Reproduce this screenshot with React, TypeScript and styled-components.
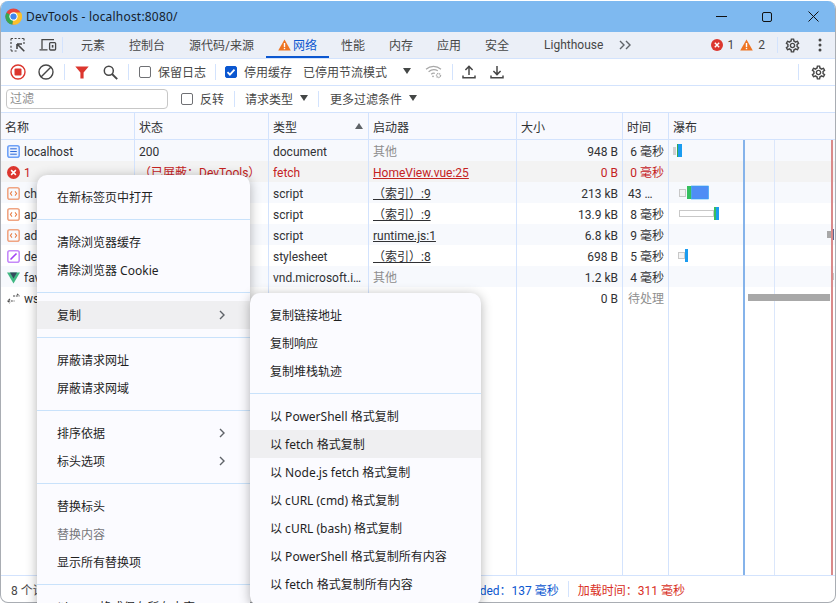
import { createGlobalStyle, styled } from 'styled-components';
import { MdOutlineSettings } from 'react-icons/md';

const GlobalStyle = createGlobalStyle`
    html, body {
        margin: 0;
        padding: 0;
        background: #fff;
    }
    * {
        box-sizing: border-box;
    }
`;

const LINE = '#d3e3fd';
const FONT = 'Roboto, "Noto Sans CJK SC", sans-serif';
const MENU_FONT = '"Noto Sans", "Noto Sans CJK SC", sans-serif';

const Page = styled.div`
    position: relative;
    width: 836px;
    height: 603px;
    padding-top: 1px;
    overflow: hidden;
    font-family: ${FONT};
    font-size: 12px;
    color: #303134;
`;

const Window = styled.div`
    height: 602px;
    display: flex;
    flex-direction: column;
    overflow: hidden;
    border: 1px solid #a9adb3;
    border-top: 0;
    border-radius: 8px;
    background: #fff;
`;

const TitleBar = styled.div`
    height: 31px;
    flex: none;
    display: flex;
    align-items: center;
    padding-left: 4px;
    background: #7eb9f0;
    color: #16212c;
`;

const TitleText = styled.span`
    margin-left: 4px;
    flex: 1;
    font-family: ${MENU_FONT};
    letter-spacing: 0.2px;
`;

const WindowButton = styled.div`
    width: 46px;
    height: 31px;
    padding-left: 2px;
    display: grid;
    place-content: center;
`;

const TabBar = styled.div`
    height: 27px;
    flex: none;
    display: flex;
    align-items: stretch;
    padding-left: 9px;
    background: #ebeff7;
    border-bottom: 1px solid ${LINE};
`;

const IconGroup = styled.div<{ $gap?: number }>`
    display: flex;
    align-items: center;
    gap: ${(p) => p.$gap ?? 12}px;
`;

const Divider = styled.div<{ $space?: number; $after?: number }>`
    width: 1px;
    height: 16px;
    flex: none;
    align-self: center;
    margin-left: ${(p) => p.$space ?? 10}px;
    margin-right: ${(p) => p.$after ?? p.$space ?? 10}px;
    background: ${LINE};
`;

const Tab = styled.div<{ $active?: boolean; $far?: boolean }>`
    display: flex;
    align-items: center;
    gap: ${(p) => (p.$active ? 2 : 4)}px;
    height: 26px;
    padding: 1px 12px 0;
    margin-left: ${(p) => (p.$far ? 11 : 0)}px;
    color: ${(p) => (p.$active ? '#0b57d0' : '#474747')};
    border-bottom: 2px solid ${(p) => (p.$active ? '#0b57d0' : 'transparent')};
`;

const MoreTabsSlot = styled.div`
    margin-left: 4px;
    display: flex;
    align-items: center;
`;

const TabRight = styled.div`
    margin-left: auto;
    display: flex;
    align-items: center;
    padding-right: 13px;
`;

const Count = styled.span`
    margin: 0 6px 0 5px;
    color: #474747;
`;

const KebabGap = styled.span`
    width: 5px;
`;

const Toolbar = styled.div`
    height: 27px;
    flex: none;
    display: flex;
    align-items: center;
    padding-left: 9px;
    border-bottom: 1px solid ${LINE};
    color: #474747;
`;

const CheckOption = styled.div<{ $space?: number }>`
    display: flex;
    align-items: center;
    gap: 7px;
    margin-right: ${(p) => p.$space ?? 0}px;
`;

const OptionText = styled.span`
    padding-bottom: 2px;
`;

const CheckBox = styled.span<{ $checked?: boolean }>`
    width: 12px;
    height: 12px;
    display: grid;
    place-content: center;
    border-radius: 2px;
    border: 1px solid ${(p) => (p.$checked ? '#0b57d0' : '#6f7074')};
    background: ${(p) => (p.$checked ? '#0b57d0' : '#fff')};
`;

const Caret = styled.span<{ $up?: boolean; $space?: number }>`
    width: 0;
    height: 0;
    margin-left: ${(p) => p.$space ?? 7}px;
    border-left: 4.5px solid transparent;
    border-right: 4.5px solid transparent;
    border-top: ${(p) => (p.$up ? '0' : '6px solid #444746')};
    border-bottom: ${(p) => (p.$up ? '6px solid #5f6368' : '0')};
    transform: translateY(-1px);
`;

const ToolbarEnd = styled.div`
    margin-left: auto;
    display: flex;
    align-items: center;
    padding-right: 8px;
`;

const WifiSlot = styled.div`
    margin-left: 14px;
    display: flex;
    align-items: center;
`;

const FilterBox = styled.div`
    width: 162px;
    height: 20px;
    margin-left: -4px;
    margin-right: 13px;
    padding-left: 3px;
    line-height: 18px;
    border: 1px solid #c7c7c7;
    border-radius: 4px;
    color: #8f8f8f;
`;

const DropLabel = styled.div`
    display: flex;
    align-items: center;
    color: #474747;
`;

const Table = styled.div`
    flex: 1;
    min-height: 0;
    display: flex;
    flex-direction: column;
`;

const COLUMNS = '133px 134px 100px 148px 106px 46px 1fr';

const HeaderRow = styled.div`
    height: 27px;
    flex: none;
    display: grid;
    grid-template-columns: ${COLUMNS};
    background: #f8f9fe;
    border-bottom: 1px solid ${LINE};
`;

const HeaderCell = styled.div`
    display: flex;
    align-items: center;
    justify-content: space-between;
    padding: 1px 5px 0 4px;
    color: #303134;
    & + & {
        border-left: 1px solid ${LINE};
    }
`;

const RowsArea = styled.div`
    position: relative;
    flex: 1;
    min-height: 0;
    display: flex;
    flex-direction: column;
`;

const Row = styled.div<{ $tone: 'plain' | 'alt' | 'blocked' }>`
    height: 21px;
    flex: none;
    display: grid;
    grid-template-columns: ${COLUMNS};
    grid-auto-rows: 21px;
    line-height: 20px;
    color: ${(p) => (p.$tone === 'blocked' ? '#c5221f' : '#303134')};
    background: ${(p) => (p.$tone === 'blocked' ? '#f3f3f3' : p.$tone === 'alt' ? '#f7f9fd' : '#fff')};
`;

const FillerRow = styled.div`
    flex: 1;
    display: grid;
    grid-template-columns: ${COLUMNS};
`;

const Cell = styled.div<{ $right?: boolean; $muted?: boolean }>`
    min-width: 0;
    padding: 2px 4px 0;
    overflow: hidden;
    white-space: nowrap;
    text-overflow: ellipsis;
    text-align: ${(p) => (p.$right ? 'right' : 'left')};
    color: ${(p) => (p.$muted ? '#8e8e8e' : 'inherit')};
    & + & {
        border-left: 1px solid ${LINE};
    }
`;

const NameCell = styled(Cell)`
    display: flex;
    align-items: center;
    gap: 4px;
    padding: 2px 4px 0 6px;
`;

const TimeCell = styled(Cell)`
    padding-left: 5px;
`;

const InitiatorLink = styled.span`
    text-decoration: underline;
`;

const WaterfallChart = styled.svg`
    position: absolute;
    top: 0;
    right: 0;
    width: 167px;
    height: 100%;
`;

const StatusBar = styled.div`
    height: 27px;
    flex: none;
    display: flex;
    align-items: center;
    padding: 0 150px 0 10px;
    border-top: 1px solid ${LINE};
    color: #474747;
`;

const StatusLoaded = styled.span`
    margin-left: auto;
    color: #0b57d0;
`;

const StatusLoad = styled.span`
    color: #d93025;
`;

const Menu = styled.div<{ $left: number; $top: number; $width: number }>`
    position: absolute;
    left: ${(p) => p.$left}px;
    top: ${(p) => p.$top}px;
    width: ${(p) => p.$width}px;
    padding: 8px 0;
    border-radius: 10px;
    background: #fbfbff;
    font-family: ${MENU_FONT};
    box-shadow: 0 2px 12px rgba(0, 0, 0, 0.3);
`;

const MenuItem = styled.div<{ $hover?: boolean; $disabled?: boolean }>`
    height: 28px;
    display: flex;
    align-items: center;
    justify-content: space-between;
    padding: 0 25px 0 20px;
    background: ${(p) => (p.$hover ? '#efeff1' : 'transparent')};
    color: ${(p) => (p.$disabled ? '#77777b' : '#1f1f1f')};
`;

const MenuSeparator = styled.div`
    height: 1px;
    margin: 8px 0;
    background: #c9e2fb;
`;

const ChromeLogo = () => (
    <svg width="17" height="17" viewBox="0 0 18 18">
        <circle cx="9" cy="9" r="8.6" fill="#e8453c" />
        <path d="M9 9 L1.5 4.9 A8.6 8.6 0 0 0 8 17.6 Z" fill="#34a853" />
        <path d="M9 4.8 H16.9 A8.6 8.6 0 0 1 8 17.6 L9 9 Z" fill="#fbc02d" />
        <circle cx="9" cy="9" r="4.4" fill="#fff" />
        <circle cx="9" cy="9" r="3.3" fill="#3f86f0" />
    </svg>
);

const SelectIcon = () => (
    <svg width="16" height="16" viewBox="0 0 16 16" fill="none" stroke="#474747" strokeWidth="1.2">
        <path d="M1 1.5h13M1 1.5v12M1 14h6M14 1.5v6" strokeDasharray="2 1.6" />
        <path d="M7 7h5M7 7v5M7.3 7.3l7 7" strokeWidth="1.6" />
    </svg>
);

const DeviceIcon = () => (
    <svg width="18" height="14" viewBox="0 0 18 14" fill="none" stroke="#474747" strokeWidth="1.3">
        <path d="M3 11V1.6h12M0.5 11.8h8" />
        <rect x="10.6" y="4.6" width="6" height="7.4" rx="1" />
        <rect x="12.8" y="7" width="1.6" height="2.6" fill="#474747" stroke="none" />
    </svg>
);

const TriangleWarn = () => (
    <svg width="13" height="12" viewBox="0 0 13 12">
        <path d="M6.5 0.5 L12.8 11.5 H0.2 Z" fill="#ee7423" />
        <rect x="5.8" y="4" width="1.4" height="4" fill="#fff" />
        <rect x="5.8" y="8.8" width="1.4" height="1.4" fill="#fff" />
    </svg>
);

const ErrorDot = ({ size = 12 }: { size?: number }) => (
    <svg width={size} height={size} viewBox="0 0 12 12">
        <circle cx="6" cy="6" r="6" fill="#dc362e" />
        <path d="M3.8 3.8l4.4 4.4M8.2 3.8l-4.4 4.4" stroke="#fff" strokeWidth="1.4" />
    </svg>
);

const MoreTabs = () => (
    <svg width="13" height="10" viewBox="0 0 13 10" fill="none" stroke="#5f6368" strokeWidth="1.4">
        <path d="M1 1l4 4-4 4M7 1l4 4-4 4" />
    </svg>
);

const Kebab = () => (
    <svg width="4" height="14" viewBox="0 0 4 14" fill="#474747">
        <circle cx="2" cy="2" r="1.5" />
        <circle cx="2" cy="7" r="1.5" />
        <circle cx="2" cy="12" r="1.5" />
    </svg>
);

const RecordIcon = () => (
    <svg width="16" height="16" viewBox="0 0 16 16">
        <circle cx="8" cy="8" r="7" fill="none" stroke="#dc362e" strokeWidth="1.4" />
        <rect x="4.5" y="4.5" width="7" height="7" rx="1" fill="#dc362e" />
    </svg>
);

const ClearIcon = () => (
    <svg width="16" height="16" viewBox="0 0 16 16" fill="none" stroke="#474747" strokeWidth="1.4">
        <circle cx="8" cy="8" r="7" />
        <path d="M3 13L13 3" />
    </svg>
);

const FilterIcon = () => (
    <svg width="14" height="13" viewBox="0 0 14 13">
        <path d="M0.3 0.5H13.7L8.6 6.4V12.6H5.4V6.4Z" fill="#dc362e" />
    </svg>
);

const SearchIcon = () => (
    <svg width="15" height="15" viewBox="0 0 15 15" fill="none" stroke="#474747" strokeWidth="1.5">
        <circle cx="5.8" cy="5.8" r="4.5" />
        <path d="M9 9l5.2 5.2" strokeWidth="1.9" />
    </svg>
);

const CheckMark = () => (
    <svg width="10" height="10" viewBox="0 0 10 10" fill="none" stroke="#fff" strokeWidth="1.8">
        <path d="M1.5 5.2l2.4 2.4 4.6-5" />
    </svg>
);

const WifiIcon = () => (
    <svg width="18" height="14" viewBox="0 0 18 14" fill="none" stroke="#a8a8a8" strokeWidth="1.2">
        <path d="M1 4.2C5.5 0.4 11.5 0.4 16 4.2M3.6 6.8C6.5 4.4 10 4.2 12.8 5.8M6.2 9.2C7.4 8.2 8.6 8 9.8 8.3" />
        <circle cx="8" cy="11.3" r="0.9" fill="#a8a8a8" stroke="none" />
        <circle cx="13.5" cy="10.5" r="2" strokeWidth="1.4" strokeDasharray="1.2 0.6" />
    </svg>
);

const UploadIcon = () => (
    <svg width="14" height="14" viewBox="0 0 14 14" fill="none" stroke="#474747" strokeWidth="1.5">
        <path d="M7 10V1.6M3.4 5L7 1.4 10.6 5M1 10.5v2.2h12v-2.2" />
    </svg>
);

const DownloadIcon = () => (
    <svg width="14" height="14" viewBox="0 0 14 14" fill="none" stroke="#474747" strokeWidth="1.5">
        <path d="M7 1v8.4M3.4 6L7 9.6 10.6 6M1 10.5v2.2h12v-2.2" />
    </svg>
);

const DocFile = () => (
    <svg width="13" height="13" viewBox="0 0 13 13">
        <rect x="0.8" y="0.8" width="11.4" height="11.4" rx="2" fill="#e8f0fe" stroke="#6ea1f7" strokeWidth="1.6" />
        <path d="M3.2 3.8h6.6M3.2 6.5h6.6M3.2 9.2h6.6" stroke="#2f6ad8" strokeWidth="1" />
    </svg>
);

const ScriptFile = () => (
    <svg width="13" height="13" viewBox="0 0 13 13" fill="none">
        <rect x="0.8" y="0.8" width="11.4" height="11.4" rx="2" stroke="#f0a583" strokeWidth="1.6" />
        <path d="M5 4.4L3.4 6.5 5 8.6M8 4.4l1.6 2.1L8 8.6" stroke="#e8804a" strokeWidth="1.1" />
    </svg>
);

const StyleFile = () => (
    <svg width="13" height="13" viewBox="0 0 13 13" fill="none">
        <rect x="0.8" y="0.8" width="11.4" height="11.4" rx="2" stroke="#c58af9" strokeWidth="1.6" />
        <path d="M3.5 9.5L9.5 3.5" stroke="#a142f4" strokeWidth="1.6" />
    </svg>
);

const VueFile = () => (
    <svg width="13" height="12" viewBox="0 0 13 12">
        <path d="M0 0.5H13L6.5 11.5Z" fill="#41b883" />
        <path d="M3 0.5H10L6.5 6.5Z" fill="#35495e" />
    </svg>
);

const SocketFile = () => (
    <svg width="13" height="11" viewBox="0 0 13 11" fill="none" stroke="#474747" strokeWidth="1.1">
        <path d="M6 3h6.5M10 0.8L12.4 3M1 8h6.5M3 5.8L0.8 8 3 10.2" strokeDasharray="2 0.8" />
    </svg>
);

const Chevron = () => (
    <svg width="6" height="10" viewBox="0 0 6 10" fill="none" stroke="#5f6368" strokeWidth="1.4">
        <path d="M1 1l4 4-4 4" />
    </svg>
);

type RequestRow = {
    name: string;
    icon: React.ReactNode;
    status: string;
    type: string;
    initiator: string;
    initiatorLink: boolean;
    size: string;
    time: string;
    pending?: boolean;
    tone: 'plain' | 'alt' | 'blocked';
};

const requests: RequestRow[] = [
    { name: 'localhost', icon: <DocFile />, status: '200', type: 'document', initiator: '其他', initiatorLink: false, size: '948 B', time: '6 毫秒', tone: 'alt' },
    { name: '1', icon: <ErrorDot size={13} />, status: '  （已屏蔽：DevTools）', type: 'fetch', initiator: 'HomeView.vue:25', initiatorLink: true, size: '0 B', time: '0 毫秒', tone: 'blocked' },
    { name: 'chunk-vendors.js', icon: <ScriptFile />, status: '200', type: 'script', initiator: '（索引）:9', initiatorLink: true, size: '213 kB', time: '43 毫秒', tone: 'alt' },
    { name: 'app.js', icon: <ScriptFile />, status: '200', type: 'script', initiator: '（索引）:9', initiatorLink: true, size: '13.9 kB', time: '8 毫秒', tone: 'plain' },
    { name: 'adsbygoogle.js', icon: <ScriptFile />, status: '200', type: 'script', initiator: 'runtime.js:1', initiatorLink: true, size: '6.8 kB', time: '9 毫秒', tone: 'alt' },
    { name: 'default.css', icon: <StyleFile />, status: '200', type: 'stylesheet', initiator: '（索引）:8', initiatorLink: true, size: '698 B', time: '5 毫秒', tone: 'plain' },
    { name: 'favicon.ico', icon: <VueFile />, status: '200', type: 'vnd.microsoft.icon', initiator: '其他', initiatorLink: false, size: '1.2 kB', time: '4 毫秒', tone: 'alt' },
    { name: 'ws', icon: <SocketFile />, status: '', type: '', initiator: '', initiatorLink: false, size: '0 B', time: '待处理', pending: true, tone: 'plain' },
];

type MenuEntry = { label: string; arrow?: boolean; hover?: boolean; disabled?: boolean } | 'separator';

const mainMenu: MenuEntry[] = [
    { label: '在新标签页中打开' },
    'separator',
    { label: '清除浏览器缓存' },
    { label: '清除浏览器 Cookie' },
    'separator',
    { label: '复制', arrow: true, hover: true },
    'separator',
    { label: '屏蔽请求网址' },
    { label: '屏蔽请求网域' },
    'separator',
    { label: '排序依据', arrow: true },
    { label: '标头选项', arrow: true },
    'separator',
    { label: '替换标头' },
    { label: '替换内容', disabled: true },
    { label: '显示所有替换项' },
    'separator',
    { label: '以 HAR 格式保存所有内容' },
];

const copyMenu: MenuEntry[] = [
    { label: '复制链接地址' },
    { label: '复制响应' },
    { label: '复制堆栈轨迹' },
    'separator',
    { label: '以 PowerShell 格式复制' },
    { label: '以 fetch 格式复制', hover: true },
    { label: '以 Node.js fetch 格式复制' },
    { label: '以 cURL (cmd) 格式复制' },
    { label: '以 cURL (bash) 格式复制' },
    { label: '以 PowerShell 格式复制所有内容' },
    { label: '以 fetch 格式复制所有内容' },
];

const renderMenu = (entries: MenuEntry[]) =>
    entries.map((entry, index) =>
        entry === 'separator' ? (
            <MenuSeparator key={index} />
        ) : (
            <MenuItem key={index} $hover={entry.hover} $disabled={entry.disabled}>
                {entry.label}
                {entry.arrow && <Chevron />}
            </MenuItem>
        ),
    );

const Waterfall = () => (
    <WaterfallChart viewBox="668 140 167 435" preserveAspectRatio="none">
        <rect x="774" y="0" width="1" height="575" fill="#dbe7fb" />
        <rect x="673" y="147" width="3" height="8" fill="#d0d0d0" />
        <rect x="677" y="144" width="1" height="13" fill="#34a853" />
        <rect x="678" y="144" width="4" height="13" fill="#1a9cf0" />
        <rect x="679.5" y="189.5" width="6" height="7" fill="#f4f4f4" stroke="#c8c8c8" />
        <rect x="687" y="186" width="4.5" height="13" fill="#36bf5f" />
        <rect x="691.5" y="186" width="17" height="13" fill="#4f8df5" stroke="#2aa4f4" strokeWidth="0.6" />
        <rect x="679.5" y="210.5" width="34" height="6" fill="#fff" stroke="#c8c8c8" />
        <rect x="714" y="207" width="2" height="13" fill="#36bf5f" />
        <rect x="716" y="207" width="3" height="13" fill="#1a9cf0" />
        <rect x="827" y="231" width="5" height="7" fill="#a8a8a8" />
        <rect x="832" y="229" width="2" height="11" fill="#5b6690" />
        <rect x="678.5" y="252.5" width="6" height="6" fill="#f4f4f4" stroke="#c8c8c8" />
        <rect x="685" y="249" width="3" height="13" fill="#1a9cf0" />
        <rect x="833" y="273" width="1" height="7" fill="#c8c8c8" />
        <rect x="748" y="294" width="82" height="7" fill="#a8a8a8" />
        <rect x="743" y="140" width="2" height="435" fill="#85b3ea" />
        <rect x="831" y="140" width="2" height="435" fill="#d98a8a" />
    </WaterfallChart>
);

const App = () => (
    <Page>
        <GlobalStyle />
        <Window>
            <TitleBar>
                <ChromeLogo />
                <TitleText>DevTools - localhost:8080/</TitleText>
                <WindowButton>
                    <svg width="11" height="1" viewBox="0 0 11 1">
                        <rect width="11" height="1" fill="#111" />
                    </svg>
                </WindowButton>
                <WindowButton>
                    <svg width="10" height="10" viewBox="0 0 10 10" fill="none" stroke="#111">
                        <rect x="0.5" y="0.5" width="9" height="9" rx="1.5" />
                    </svg>
                </WindowButton>
                <WindowButton>
                    <svg width="11" height="11" viewBox="0 0 11 11" fill="none" stroke="#111">
                        <path d="M0.5 0.5l10 10M10.5 0.5l-10 10" />
                    </svg>
                </WindowButton>
            </TitleBar>

            <TabBar>
                <IconGroup $gap={13}>
                    <SelectIcon />
                    <DeviceIcon />
                </IconGroup>
                <Divider $space={5} $after={6} />
                <Tab>元素</Tab>
                <Tab>控制台</Tab>
                <Tab>源代码/来源</Tab>
                <Tab $active>
                    <TriangleWarn />
                    网络
                </Tab>
                <Tab>性能</Tab>
                <Tab>内存</Tab>
                <Tab>应用</Tab>
                <Tab>安全</Tab>
                <Tab $far>Lighthouse</Tab>
                <MoreTabsSlot>
                    <MoreTabs />
                </MoreTabsSlot>
                <TabRight>
                    <ErrorDot />
                    <Count>1</Count>
                    <TriangleWarn />
                    <Count>2</Count>
                    <Divider $space={6} />
                    <MdOutlineSettings size={17} color="#474747" />
                    <IconGroup>
                        <KebabGap />
                        <Kebab />
                    </IconGroup>
                </TabRight>
            </TabBar>

            <Toolbar>
                <IconGroup $gap={12}>
                    <RecordIcon />
                    <ClearIcon />
                </IconGroup>
                <Divider $space={10} />
                <IconGroup $gap={14}>
                    <FilterIcon />
                    <SearchIcon />
                </IconGroup>
                <Divider $space={10} />
                <CheckOption>
                    <CheckBox />
                    <OptionText>保留日志</OptionText>
                </CheckOption>
                <Divider $space={9} />
                <CheckOption $space={11}>
                    <CheckBox $checked>
                        <CheckMark />
                    </CheckBox>
                    <OptionText>停用缓存</OptionText>
                </CheckOption>
                <DropLabel>
                    <OptionText>已停用节流模式</OptionText>
                    <Caret $space={16} />
                </DropLabel>
                <WifiSlot>
                    <WifiIcon />
                </WifiSlot>
                <Divider $space={9} />
                <IconGroup $gap={14}>
                    <UploadIcon />
                    <DownloadIcon />
                </IconGroup>
                <ToolbarEnd>
                    <Divider $space={11} />
                    <MdOutlineSettings size={17} color="#474747" />
                </ToolbarEnd>
            </Toolbar>

            <Toolbar>
                <FilterBox>过滤</FilterBox>
                <CheckOption>
                    <CheckBox />
                    <OptionText>反转</OptionText>
                </CheckOption>
                <Divider $space={10} />
                <DropLabel>
                    <OptionText>请求类型</OptionText>
                    <Caret />
                </DropLabel>
                <Divider $space={10} $after={11} />
                <DropLabel>
                    <OptionText>更多过滤条件</OptionText>
                    <Caret />
                </DropLabel>
            </Toolbar>

            <Table>
                <HeaderRow>
                    <HeaderCell>名称</HeaderCell>
                    <HeaderCell>状态</HeaderCell>
                    <HeaderCell>
                        类型
                        <Caret $up />
                    </HeaderCell>
                    <HeaderCell>启动器</HeaderCell>
                    <HeaderCell>大小</HeaderCell>
                    <HeaderCell>时间</HeaderCell>
                    <HeaderCell>瀑布</HeaderCell>
                </HeaderRow>
                <RowsArea>
                    {requests.map((request) => (
                        <Row key={request.name} $tone={request.tone}>
                            <NameCell>
                                {request.icon}
                                {request.name}
                            </NameCell>
                            <Cell>{request.status}</Cell>
                            <Cell>{request.type}</Cell>
                            <Cell $muted={!request.initiatorLink}>
                                {request.initiatorLink ? <InitiatorLink>{request.initiator}</InitiatorLink> : request.initiator}
                            </Cell>
                            <Cell $right>{request.size}</Cell>
                            <TimeCell $right $muted={request.pending}>{request.time}</TimeCell>
                            <Cell />
                        </Row>
                    ))}
                    <FillerRow>
                        <Cell />
                        <Cell />
                        <Cell />
                        <Cell />
                        <Cell />
                        <Cell />
                        <Cell />
                    </FillerRow>
                    <Waterfall />
                </RowsArea>
            </Table>

            <StatusBar>
                8 个请求
                <StatusLoaded>DOMContentLoaded：137 毫秒</StatusLoaded>
                <Divider $space={9} />
                <StatusLoad>加载时间：311 毫秒</StatusLoad>
            </StatusBar>
        </Window>

        <Menu $left={37} $top={175} $width={213}>
            {renderMenu(mainMenu)}
        </Menu>
        <Menu $left={250} $top={293} $width={231}>
            {renderMenu(copyMenu)}
        </Menu>
    </Page>
);

export default App;
